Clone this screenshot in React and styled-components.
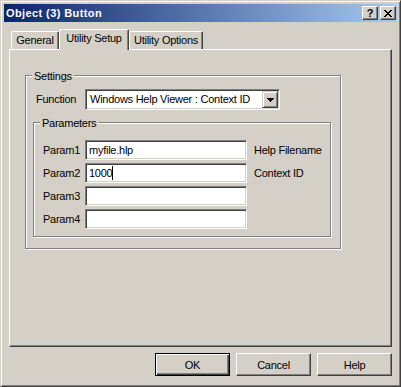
import React from "react";
import styled, { createGlobalStyle } from "styled-components";

const GlobalStyle = createGlobalStyle`
  * { box-sizing: border-box; }
  html, body {
    margin: 0;
    padding: 0;
    background: #d4d0c8;
  }
  body {
    font-family: "Liberation Sans", Arial, sans-serif;
    font-size: 11px;
    letter-spacing: -0.25px;
    color: #000;
  }
`;

const Window = styled.div`
  width: 401px;
  height: 387px;
  display: flex;
  flex-direction: column;
  padding: 3px;
  background: #d4d0c8;
  border: 1px solid;
  border-color: #d4d0c8 #404040 #404040 #d4d0c8;
  box-shadow: inset 1px 1px #fff, inset -1px -1px #808080;
`;

const TitleBar = styled.div`
  height: 18px;
  display: flex;
  align-items: center;
  gap: 2px;
  padding: 0 1px 0 2px;
  background: linear-gradient(to right, #0a246a, #a6caf0);
`;

const Title = styled.div`
  flex: 1;
  color: #fff;
  font-weight: bold;
  font-size: 11px;
  letter-spacing: 0.4px;
  line-height: 18px;
`;

const CaptionButton = styled.div`
  width: 16px;
  height: 14px;
  display: flex;
  align-items: center;
  justify-content: center;
  background: #d4d0c8;
  border: 1px solid;
  border-color: #fff #404040 #404040 #fff;
  box-shadow: inset -1px -1px #808080;
  font-weight: bold;
  font-size: 11px;
  line-height: 1;
  letter-spacing: 0;
`;

const Body = styled.div`
  flex: 1;
  display: flex;
  flex-direction: column;
  padding: 7px 5px 0 5px;
`;

const TabStrip = styled.div`
  height: 20px;
  display: flex;
  align-items: flex-end;
  padding-left: 2px;
`;

const Tab = styled.div`
  position: relative;
  z-index: ${(p) => (p.$active ? 1 : 0)};
  width: ${(p) => p.$w}px;
  height: ${(p) => (p.$active ? 21 : 18)}px;
  margin-bottom: ${(p) => (p.$active ? -1 : 0)}px;
  padding-top: 2px;
  text-align: center;
  line-height: 13px;
  background: #d4d0c8;
  border-top: 1px solid #fff;
  border-left: 1px solid #fff;
  border-right: 1px solid #404040;
  border-radius: 2px 2px 0 0;
  box-shadow: inset -1px 0 #808080;
`;

const Panel = styled.div`
  height: 298px;
  padding: 25px 0 0 15px;
  border: 1px solid;
  border-color: #fff #404040 #404040 #fff;
  box-shadow: inset -1px -1px #808080;
`;

const GroupBox = styled.div`
  width: ${(p) => p.$w}px;
  margin: ${(p) => p.$margin || 0};
  padding: ${(p) => p.$pad || 0};
  border: 1px solid #808080;
  box-shadow: inset 1px 1px #fff, 1px 1px #fff;
`;

const GroupLabel = styled.div`
  width: fit-content;
  margin: -6px 0 0 6px;
  padding: 0 2px;
  line-height: 13px;
  background: #d4d0c8;
`;

const FunctionRow = styled.div`
  display: flex;
  align-items: center;
  margin-top: 6px;
  padding-left: 10px;
`;

const RowLabel = styled.div`
  width: ${(p) => p.$w}px;
  line-height: 13px;
`;

const Sunken = styled.div`
  width: ${(p) => p.$w}px;
  height: ${(p) => p.$h}px;
  display: flex;
  align-items: center;
  background: #fff;
  border: 1px solid;
  border-color: #808080 #fff #fff #808080;
  box-shadow: inset 1px 1px #404040, inset -1px -1px #d4d0c8;
  line-height: 13px;
  white-space: nowrap;
`;

const Select = styled(Sunken)`
  padding: 1px;
`;

const SelectText = styled.div`
  flex: 1;
  padding-left: 3px;
`;

const DropButton = styled.div`
  width: 16px;
  height: 17px;
  display: flex;
  align-items: center;
  justify-content: center;
  background: #d4d0c8;
  border: 1px solid;
  border-color: #d4d0c8 #404040 #404040 #d4d0c8;
  box-shadow: inset 1px 1px #fff, inset -1px -1px #808080;
`;

const ParamGrid = styled.div`
  display: grid;
  grid-template-columns: 42px 162px auto;
  row-gap: 3px;
  align-items: center;
  margin-top: 10px;
  padding-left: 9px;
`;

const Field = styled(Sunken)`
  padding-left: 3px;
`;

const Caret = styled.span`
  display: inline-block;
  width: 1px;
  height: 14px;
  background: #000;
`;

const Note = styled.div`
  padding-left: 7px;
  line-height: 13px;
  white-space: nowrap;
`;

const ButtonRow = styled.div`
  display: flex;
  justify-content: flex-end;
  gap: 6px;
  margin-top: 6px;
`;

const Button = styled.button`
  width: 75px;
  height: 23px;
  padding: 0;
  font-family: inherit;
  font-size: 11px;
  letter-spacing: inherit;
  color: #000;
  background: #d4d0c8;
  border: 1px solid;
  border-color: ${(p) => (p.$default ? "#000" : "#fff #404040 #404040 #fff")};
  box-shadow: ${(p) =>
    p.$default
      ? "inset 1px 1px #fff, inset -1px -1px #404040, inset -2px -2px #808080"
      : "inset -1px -1px #808080"};
`;

const CloseGlyph = () => (
  <svg width="8" height="7" viewBox="0 0 8 7" shapeRendering="crispEdges">
    <path
      d="M0 0h2v1H0zM6 0h2v1H6zM1 1h2v1H1zM5 1h2v1H5zM2 2h4v1H2zM3 3h2v1H3zM2 4h4v1H2zM1 5h2v1H1zM5 5h2v1H5zM0 6h2v1H0zM6 6h2v1H6z"
      fill="#000"
    />
  </svg>
);

const params = [
  { label: "Param1", value: "myfile.hlp", note: "Help Filename" },
  { label: "Param2", value: "1000", note: "Context ID", caret: true },
  { label: "Param3", value: "" },
  { label: "Param4", value: "" },
];

export default function App() {
  return (
    <>
      <GlobalStyle />
      <Window>
        <TitleBar>
          <Title>Object (3) Button</Title>
          <CaptionButton>?</CaptionButton>
          <CaptionButton>
            <CloseGlyph />
          </CaptionButton>
        </TitleBar>
        <Body>
          <TabStrip>
            <Tab $w={48}>General</Tab>
            <Tab $w={70} $active>
              Utility Setup
            </Tab>
            <Tab $w={74}>Utility Options</Tab>
          </TabStrip>
          <Panel>
            <GroupBox $w={316} $pad="0 0 11px 0">
              <GroupLabel>Settings</GroupLabel>
              <FunctionRow>
                <RowLabel $w={49}>Function</RowLabel>
                <Select $w={195} $h={21}>
                  <SelectText>Windows Help Viewer : Context ID</SelectText>
                  <DropButton>
                    <svg width="7" height="4" viewBox="0 0 7 4" shapeRendering="crispEdges">
                      <path d="M0 0h7v1H0zM1 1h5v1H1zM2 2h3v1H2zM3 3h1v1H3z" fill="#000" />
                    </svg>
                  </DropButton>
                </Select>
              </FunctionRow>
              <GroupBox $w={298} $margin="12px 0 0 7px" $pad="0 0 7px 0">
                <GroupLabel>Parameters</GroupLabel>
                <ParamGrid>
                  {params.map((p) => (
                    <React.Fragment key={p.label}>
                      <RowLabel>{p.label}</RowLabel>
                      <Field $w={162} $h={20}>
                        {p.value}
                        {p.caret && <Caret />}
                      </Field>
                      <Note>{p.note}</Note>
                    </React.Fragment>
                  ))}
                </ParamGrid>
              </GroupBox>
            </GroupBox>
          </Panel>
          <ButtonRow>
            <Button $default>OK</Button>
            <Button>Cancel</Button>
            <Button>Help</Button>
          </ButtonRow>
        </Body>
      </Window>
    </>
  );
}
